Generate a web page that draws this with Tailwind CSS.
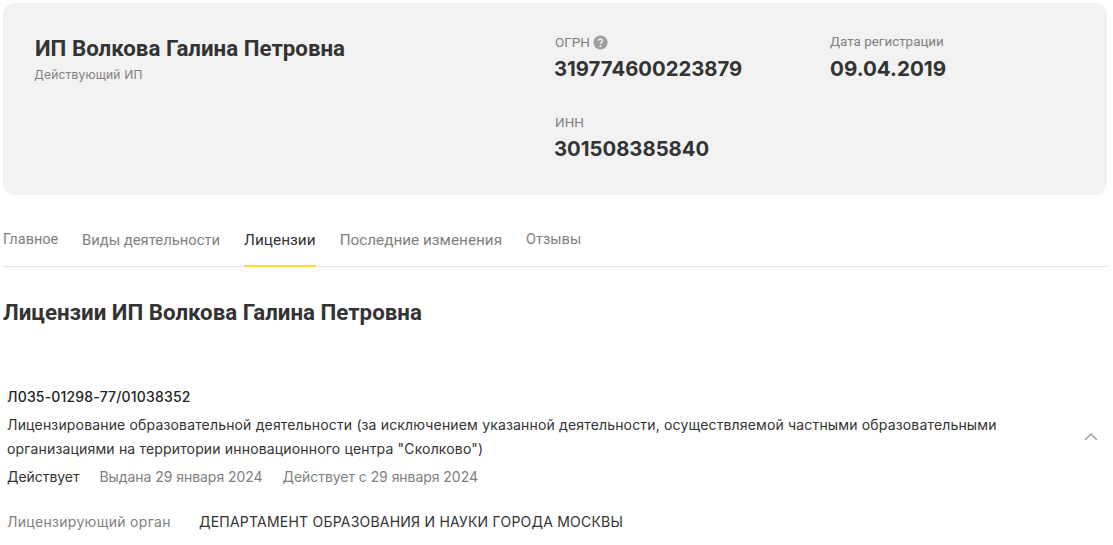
<!DOCTYPE html>
<html lang="ru"><head><meta charset="utf-8">
<script src="https://cdn.jsdelivr.net/npm/@tailwindcss/browser@4"></script></head>
<body class="bg-white font-['Roboto',sans-serif] text-[#333333] overflow-hidden">
<div class="w-[1113px] h-[545px] overflow-hidden pl-[3px] pr-[6px] pt-[3px]">
  <section class="h-[192px] bg-[#f2f2f2] rounded-[12px] flex pl-[32px] pt-[32px]">
    <div class="w-[520px]">
      <h1 class="text-[22.3px] leading-[26px] font-bold">ИП Волкова Галина Петровна</h1>
      <p class="text-[12px] leading-[16px] text-[#808080] mt-[6px] tracking-[0.2px] font-['Inter',sans-serif] -ml-[1px]">Действующий ИП</p>
    </div>
    <div class="w-[275px] -mt-[1px]">
      <div class="flex items-center gap-[3px] text-[13.5px] leading-[16px] text-[#808080]">ОГРН
        <svg class="w-[15px] h-[15px]" viewBox="0 0 16 16"><circle cx="8" cy="8" r="7.5" fill="#9e9e9e"/><path d="M5.8 6.2a2.2 2 0 1 1 3.4 1.7c-.8.5-1.2.9-1.2 1.7" fill="none" stroke="#f2f2f2" stroke-width="1.6"/><circle cx="8" cy="12" r="1" fill="#f2f2f2"/></svg>
      </div>
      <div class="text-[20.3px] leading-[28px] font-bold mt-[5px] font-['Inter',sans-serif] -ml-[1px]">319774600223879</div>
      <div class="text-[13.5px] leading-[16px] text-[#808080] mt-[31px]">ИНН</div>
      <div class="text-[20.3px] leading-[28px] font-bold mt-[5px] font-['Inter',sans-serif] -ml-[1px]">301508385840</div>
    </div>
    <div class="-mt-[1px]">
      <div class="text-[13.4px] leading-[16px] text-[#808080]">Дата регистрации</div>
      <div class="text-[20.6px] leading-[28px] font-bold mt-[5px] font-['Inter',sans-serif]">09.04.2019</div>
    </div>
  </section>
  <nav class="h-[72px] border-b border-[#e5e5e5] flex gap-[24px] text-[#808080] leading-[20px]">
    <a class="pt-[35px] text-[14.5px] w-[55px]">Главное</a>
    <a class="pt-[35px] text-[14.8px]">Виды деятельности</a>
    <a class="pt-[35px] text-[#333333] border-b-2 border-[#ffdd2d] h-[72px] text-[15.4px]">Лицензии</a>
    <a class="pt-[35px] text-[15.3px]">Последние изменения</a>
    <a class="pt-[35px] text-[14.5px]">Отзывы</a>
  </nav>
  <h2 class="text-[22.3px] leading-[26px] font-bold mt-[32px]">Лицензии ИП Волкова Галина Петровна</h2>
  <div class="mt-[60px] pl-[4px] flex items-center font-['Inter',sans-serif] text-[14px]">
    <div class="w-[1010px]">
      <div class="leading-[24px] text-[#222222] font-medium tracking-[0.18px]">Л035-01298-77/01038352</div>
      <p class="leading-[24px] mt-[4px] text-[#333333] tracking-[0.16px]">Лицензирование образовательной деятельности (за исключением указанной деятельности, осуществляемой частными образовательными организациями на территории инновационного центра "Сколково")</p>
      <div class="flex gap-[20px] leading-[24px] mt-[4px] text-[#808080] tracking-[-0.05px]"><span class="text-[#333333]">Действует</span><span>Выдана 29 января 2024</span><span>Действует с 29 января 2024</span></div>
    </div>
    <svg class="w-[14px] h-[8px] ml-[67px]" viewBox="0 0 14 8" fill="none" stroke="#a0a0a0" stroke-width="1.5"><path d="M1 7l6-6 6 6"/></svg>
  </div>
  <div class="mt-[21px] pl-[4px] flex font-['Inter',sans-serif] text-[14px] leading-[24px]"><span class="w-[192px] text-[#808080] tracking-[0.3px]">Лицензирующий орган</span><span class="tracking-[0.22px]">ДЕПАРТАМЕНТ ОБРАЗОВАНИЯ И НАУКИ ГОРОДА МОСКВЫ</span></div>
</div>
</body></html>
